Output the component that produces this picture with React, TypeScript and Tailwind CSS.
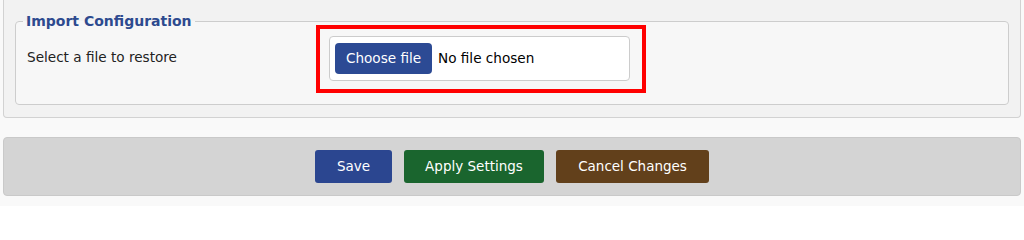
const font = { fontFamily: '"DejaVu Sans", Verdana, sans-serif' }

export default function App() {
  return (
    <div className="min-h-[206px] bg-[#f9f9f9] px-[3px]" style={font}>
      {/* Import panel (top edge sits above the viewport) */}
      <div className="border border-t-0 border-[#d2d2d2] rounded-b-[4px] bg-[#f2f2f2] px-[11px] pt-[13px] pb-[12px]">
        <fieldset className="border border-[#cdcdcd] rounded-[4px] bg-[#f7f7f7] pl-[11px] pr-[11px] pt-0 pb-[11px] min-w-0">
          <legend className="-ml-[4px] px-[3px] text-[14px] leading-[16px] font-bold text-[#2d4a8f]">
            Import Configuration
          </legend>
          <div className="flex items-center -mt-[4px]">
            <div className="w-[289px] text-[13.6px] text-[#222] -mt-[3px]">Select a file to restore</div>
            <div className="border-4 border-[#ff0000] w-[330px] h-[68px] pl-[9px] pt-[7px]">
              <div className="flex items-center w-[301px] h-[45px] bg-white border border-[#cccccc] rounded-[4px] px-[5px]">
                <button className="h-[31px] w-[97px] rounded-[4px] bg-[#2c4a94] text-white text-[13.6px]">
                  Choose file
                </button>
                <span className="ml-[6px] text-[13.6px] text-black">No file chosen</span>
              </div>
            </div>
          </div>
        </fieldset>
      </div>

      {/* Action bar */}
      <div className="mt-[19px] flex justify-center gap-[12px] border border-[#c9c9c9] rounded-[4px] bg-[#d4d4d4] pt-[12px] pb-[12px]">
        <button className="h-[33px] w-[77px] rounded-[3px] bg-[#2b4690] text-white text-[13.5px]">Save</button>
        <button className="h-[33px] w-[140px] rounded-[3px] bg-[#1a652e] text-white text-[13.5px]">Apply Settings</button>
        <button className="h-[33px] w-[153px] rounded-[3px] bg-[#62401b] text-white text-[13.5px]">Cancel Changes</button>
      </div>
    </div>
  )
}
